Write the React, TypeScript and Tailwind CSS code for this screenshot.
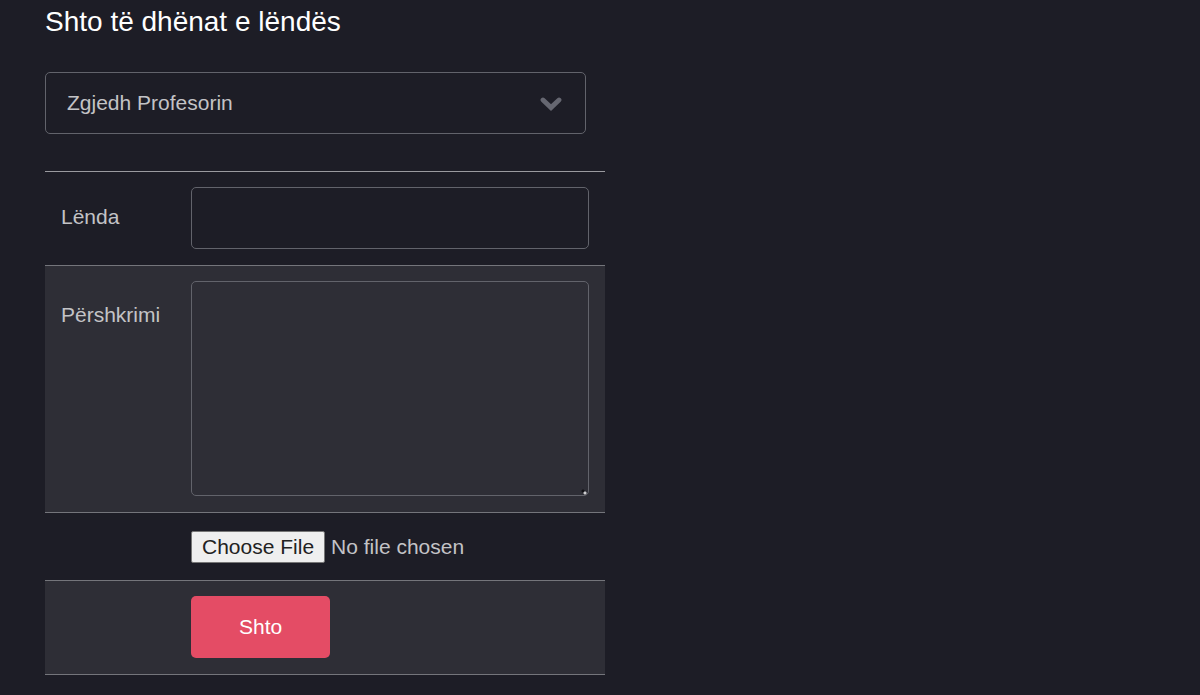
import type { ReactNode } from "react";

const fieldClass =
  "block w-full rounded-[5px] border border-[#62636b] bg-transparent px-[21px] text-[21px] text-[#c3c3c6] outline-none focus:border-[#e44c65]";

function Row({ label, htmlFor, shaded = false, tall = false, children }: {
  label?: string;
  htmlFor?: string;
  shaded?: boolean;
  tall?: boolean;
  children: ReactNode;
}) {
  return (
    <div
      className={`grid grid-cols-[130px_minmax(0,1fr)] border-b border-[#74757b] px-4 pt-[15px] pb-4 ${
        shaded ? "bg-[#2e2e36]" : ""
      }`}
    >
      {label ? (
        <label
          htmlFor={htmlFor}
          className={`flex items-center ${tall ? "h-[68px]" : "h-[60px]"}`}
        >
          {label}
        </label>
      ) : (
        <span />
      )}
      {children}
    </div>
  );
}

export default function App() {
  return (
    <main className="min-h-screen bg-[#1d1d26] px-[45px] pt-1 pb-5 font-['Liberation_Sans',Arial,sans-serif] text-[21px] text-[#c3c3c6]">
      <form className="max-w-[560px]" onSubmit={(e) => e.preventDefault()}>
        <h1 className="text-[28px] leading-9 text-white">Shto të dhënat e lëndës</h1>

        <div className="mt-8 mr-[19px] grid items-center">
          <select
            aria-label="Zgjedh Profesorin"
            className={`${fieldClass} col-start-1 row-start-1 h-[62px] appearance-none pr-16`}
          >
            <option>Zgjedh Profesorin</option>
          </select>
          <svg
            aria-hidden="true"
            viewBox="0 0 22 14"
            className="pointer-events-none col-start-1 row-start-1 mt-0.5 mr-6 h-[14px] w-[22px] justify-self-end"
          >
            <path
              d="M3 3 11 10.6 19 3"
              fill="none"
              stroke="#666771"
              strokeWidth="4.8"
              strokeLinecap="round"
            />
          </svg>
        </div>

        <div className="mt-[37px] border-t border-[#9a9a9f]">
          <Row label="Lënda" htmlFor="lenda">
            <input id="lenda" type="text" className={`${fieldClass} h-[62px]`} />
          </Row>
          <Row label="Përshkrimi" htmlFor="pershkrimi" shaded tall>
            <textarea
              id="pershkrimi"
              className={`${fieldClass} h-[215px] resize-y py-4 [&::-webkit-resizer]:bg-[radial-gradient(circle_at_12px_13px,#d0d0d2_1px,transparent_2px),radial-gradient(circle_at_10px_11px,#101014_1px,transparent_2px)]`}
            />
          </Row>
          <Row>
            <input
              type="file"
              aria-label="Choose File"
              className="mt-[3px] mb-px h-8 w-full leading-7 file:mr-1.5 file:h-8 file:rounded-[2px] file:border file:border-solid file:border-[#767676] file:bg-[#efefef] file:px-2.5 file:text-[#222222]"
            />
          </Row>
          <Row shaded>
            <button
              type="submit"
              className="h-[62px] justify-self-start rounded-[5px] bg-[#e44c65] px-12 text-white"
            >
              Shto
            </button>
          </Row>
        </div>
      </form>
    </main>
  );
}
